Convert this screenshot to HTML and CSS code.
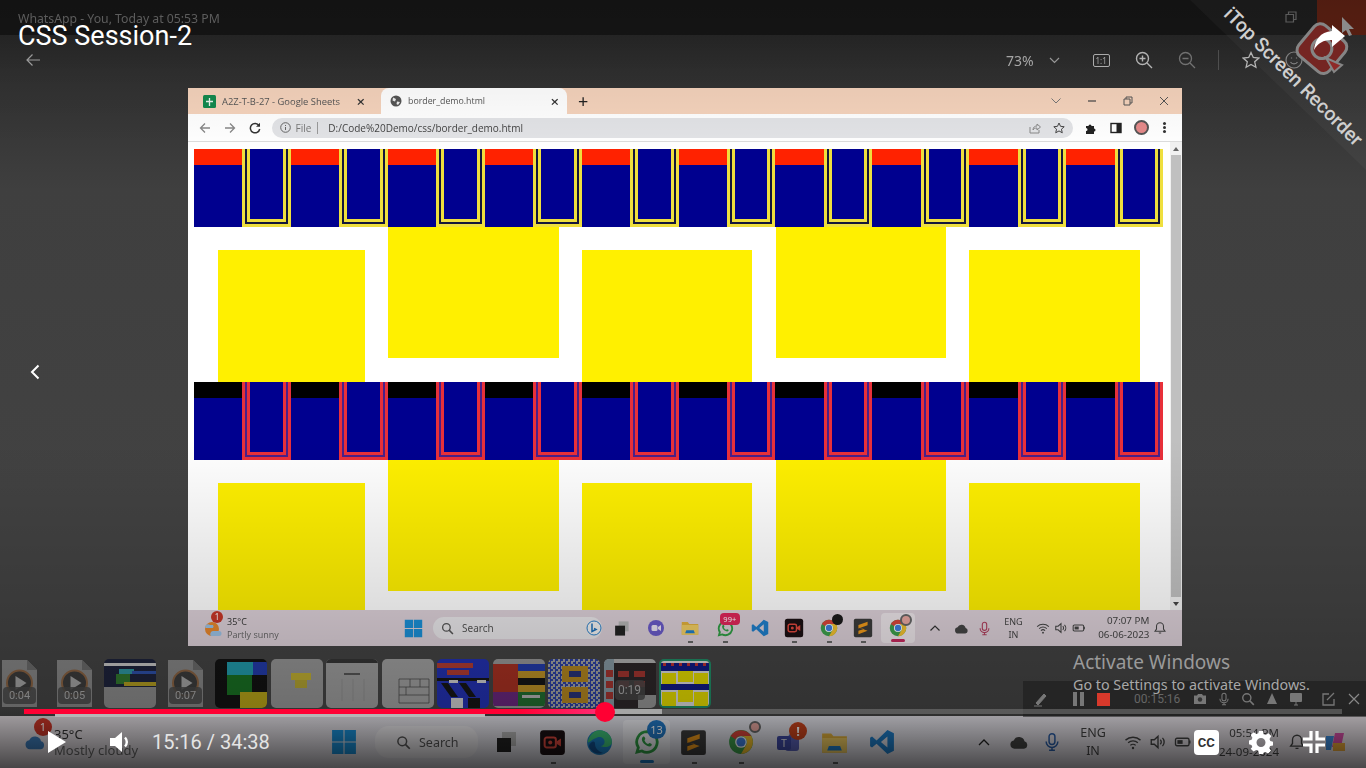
FILE: index.html
```html
<!DOCTYPE html>
<html lang="en">
<head>
    <meta charset="UTF-8">
    <meta name="viewport" content="width=device-width, initial-scale=1.0">
    <title>CSS Session-2</title>
    <link rel="stylesheet" href="styles.css">
</head>
<body>
    <svg class="sprite" aria-hidden="true">
        <symbol id="i-win" viewBox="0 0 24 24"><path fill="#1a8fd6" d="M1 1h10.5v10.5H1zM12.500 1H23v10.5H12.500zM1 12.500h10.5V23H1zM12.500 12.500H23V23H12.500z"/></symbol>
        <symbol id="i-search" viewBox="0 0 24 24"><circle cx="10" cy="10" r="7" fill="none" stroke="currentColor" stroke-width="2.4"/><path d="M15 15l7 7" stroke="currentColor" stroke-width="2.8"/></symbol>
        <symbol id="i-chrome" viewBox="0 0 24 24"><circle cx="12" cy="12" r="11" fill="#3d9f4c"/><path fill="#d9453a" d="M2.500 6.500A11 11 0 0 1 21.500 6.500H12a5.500 5.500 0 0 0-5 3.200z"/><path fill="#f2c02e" d="M21.500 6.500A11 11 0 0 1 12 23l4.800-8.200A5.500 5.500 0 0 0 12 6.500z"/><circle cx="12" cy="12" r="5.400" fill="#fff"/><circle cx="12" cy="12" r="4.200" fill="#3f7fe0"/></symbol>
        <symbol id="i-whatsapp" viewBox="0 0 24 24"><path fill="none" stroke="#2f9e44" stroke-width="2.600" d="M12 2.500a9.500 9.500 0 0 0-8 14.600L2.800 21.400l4.500-1.100A9.500 9.500 0 1 0 12 2.500z"/><path fill="#2f9e44" d="M8.300 7.200c1-.9 1.600.2 2.100 1.600.2.600-.8 1.200-.7 1.700.5 1.400 1.900 2.800 3.200 3.300.5.100 1-.9 1.600-.8 1.400.5 2.500 1 1.700 2.200-1 1.400-2.800 1-4.600.1-2-1-3.400-2.600-4.100-4.400-.5-1.500-.2-2.800.8-3.700z"/></symbol>
        <symbol id="i-vscode" viewBox="0 0 24 24"><path fill="#1f7fcb" d="M17 1l6 3v16l-6 3L7 13.500 2.800 17 1 16V8l1.800-1L7 10.500zM17 7l-6 5 6 5z"/></symbol>
        <symbol id="i-folder" viewBox="0 0 24 24"><path fill="#e3b23c" d="M1 4h8l2 2.500h12V21H1z"/><path fill="#f3cf63" d="M1 8h22v13H1z"/><path fill="#1f7fcb" d="M7 15h10l1.500 4h-13z"/></symbol>
        <symbol id="i-sublime" viewBox="0 0 24 24"><rect x="1" y="1" width="22" height="22" rx="2" fill="#3b3b3b"/><path fill="#f09a1a" d="M17.500 4.500v4.200L6.500 12.500V8.300zM6.500 11.500l11 3.700L6.500 19.500v-4.200l6.500-2z"/></symbol>
        <symbol id="i-rec" viewBox="0 0 24 24"><rect x="1" y="1" width="22" height="22" rx="3" fill="#1b1013"/><rect x="5" y="7.500" width="10" height="9" rx="2" fill="none" stroke="#e0483e" stroke-width="1.800"/><path fill="#e0483e" d="M15.500 11l4-2.500v7l-4-2.500z"/><circle cx="10" cy="12" r="1.800" fill="#e0483e"/></symbol>
        <symbol id="i-edge" viewBox="0 0 24 24"><circle cx="12" cy="12" r="11" fill="#1b7fc4"/><path fill="#3fc47a" d="M1.500 12C2.500 5 8 1 12 1c6 0 11 4.500 11 10.500 0 3-3 4.500-5.500 4.500-3 0-4.500-1-4.500-1 2 0 3.500-1.500 3.500-3.500C16.500 8 13 6.500 10 7.500 5.500 9 3 12 1.500 12z"/><path fill="#12508f" d="M8 13c0 4 3 7 7 8-5 2.500-11-1-12.500-6C4 11 8 9.500 8 13z"/></symbol>
        <symbol id="i-task" viewBox="0 0 24 24"><rect x="8" y="2" width="14" height="14" fill="#b4b4b4"/><rect x="3" y="8" width="14" height="14" fill="#222"/></symbol>
        <symbol id="i-cloud" viewBox="0 0 24 24"><path fill="currentColor" d="M6.500 20a5 5 0 0 1-.8-9.900 6.800 6.800 0 0 1 12.900 1.100A4.500 4.500 0 0 1 18 20z"/></symbol>
        <symbol id="i-mic" viewBox="0 0 24 24"><rect x="8.500" y="2" width="7" height="13" rx="3.500" fill="none" stroke="currentColor" stroke-width="1.800"/><path d="M5 11.500a7 7 0 0 0 14 0M12 18.500V22M8.500 22h7" fill="none" stroke="currentColor" stroke-width="1.800"/></symbol>
        <symbol id="i-wifi" viewBox="0 0 24 24"><path d="M2 9.500a15 15 0 0 1 20 0M5.500 13a10 10 0 0 1 13 0M8.500 16.500a5 5 0 0 1 7 0" fill="none" stroke="currentColor" stroke-width="1.800"/><circle cx="12" cy="20" r="1.600" fill="currentColor"/></symbol>
        <symbol id="i-volume" viewBox="0 0 24 24"><path d="M3 9h4l5-4.500v15L7 15H3z" fill="none" stroke="currentColor" stroke-width="1.800"/><path d="M15 9a4 4 0 0 1 0 6M18 6.500a8 8 0 0 1 0 11" fill="none" stroke="currentColor" stroke-width="1.800"/></symbol>
        <symbol id="i-battery" viewBox="0 0 24 24"><rect x="2" y="7" width="18" height="10" rx="2" fill="none" stroke="currentColor" stroke-width="1.800"/><rect x="4.500" y="9.500" width="7" height="5" fill="currentColor"/><path d="M21 10v4" stroke="currentColor" stroke-width="2"/></symbol>
        <symbol id="i-bell" viewBox="0 0 24 24"><path d="M12 3a6 6 0 0 0-6 6v5l-2.500 3.500h17L18 14V9a6 6 0 0 0-6-6zM10 20.500h4" fill="none" stroke="currentColor" stroke-width="1.800"/></symbol>
        <symbol id="i-thumbfile" viewBox="0 0 35 49"><path fill="#8a8a8a" d="M0 1h25l10 10v37H0z"/><path fill="#6c6c6c" d="M25 1l10 10H25z"/><circle cx="17.500" cy="24" r="12.500" fill="#3a3a3a" stroke="#8d6340" stroke-width="2"/><path fill="#aaa" d="M13.500 17l11 7-11 7z"/></symbol>
    </svg>

    <div class="stage">
        <div class="video">
            <div class="viewer-head">
                <span class="viewer-caption">WhatsApp - You, Today at 05:53 PM</span>
                <svg class="viewer-restore" width="14" height="14" viewBox="0 0 14 14"><path d="M2 4.500h7.500V12H2zM4.500 4.500V2H12v7.500H9.500" fill="none" stroke="#666" stroke-width="1.200"/></svg>
                <span class="viewer-close"></span>
            </div>
            <div class="viewer-tools">
                <svg class="tool-back" width="16" height="14" viewBox="0 0 16 14"><path d="M15 7H2M7.500 1.500L2 7l5.500 5.500" fill="none" stroke="#aaa" stroke-width="1.200"/></svg>
                <span class="tool-zoom">73%</span>
                <svg class="tool-chevron" width="11" height="7" viewBox="0 0 11 7"><path d="M1 1l4.500 4.500L10 1" fill="none" stroke="#a5a5a5" stroke-width="1.200"/></svg>
                <span class="tool-ratio">1:1</span>
                <svg class="tool-icon" width="18" height="18" viewBox="0 0 18 18"><circle cx="7.500" cy="7.500" r="6" fill="none" stroke="#c4c4c4" stroke-width="1.400"/><path d="M12 12l5 5M4.500 7.500h6M7.500 4.500v6" stroke="#c4c4c4" stroke-width="1.400"/></svg>
                <svg class="tool-icon" width="18" height="18" viewBox="0 0 18 18"><circle cx="7.500" cy="7.500" r="6" fill="none" stroke="#7c7c7c" stroke-width="1.300"/><path d="M12 12l5 5M4.500 7.500h6" stroke="#7c7c7c" stroke-width="1.300"/></svg>
                <span class="tool-divider"></span>
                <svg class="tool-icon" width="18" height="18" viewBox="0 0 18 18"><path d="M9 1.500l2.300 5 5.500.6-4.100 3.700 1.200 5.400L9 13.400l-4.900 2.800 1.200-5.400L1.200 7.100l5.500-.6z" fill="none" stroke="#c4c4c4" stroke-width="1.300"/></svg>
                <svg class="tool-smile" width="18" height="18" viewBox="0 0 18 18"><circle cx="9" cy="9" r="8" fill="none" stroke="#8a8a8a" stroke-width="1.200"/><path d="M5.500 11c1.500 2.500 5.500 2.500 7 0M6.500 6.500v1M11.500 6.500v1" fill="none" stroke="#8a8a8a" stroke-width="1.200"/></svg>
            </div>

            <div class="browser">
                <div class="tab-strip">
                    <div class="tab">
                        <svg width="13" height="13" viewBox="0 0 13 13"><rect width="13" height="13" rx="1.500" fill="#138a4f"/><path d="M6.500 3v8M3 6.500h7" stroke="#e9f5ee" stroke-width="1.300"/></svg>
                        <span class="tab-title tab-title-long">A2Z-T-B-27 - Google Sheets</span>
                        <span class="tab-x">×</span>
                    </div>
                    <div class="tab tab-active">
                        <svg width="12" height="12" viewBox="0 0 12 12"><circle cx="6" cy="6" r="5.500" fill="#555"/><path d="M3 2.500l3 1.500-1 2.500-2.500-1zM7 6.500l3 .5-2 3-1.500-1z" fill="#eee"/></svg>
                        <span class="tab-title">border_demo.html</span>
                        <span class="tab-x">×</span>
                    </div>
                    <span class="tab-new">+</span>
                    <div class="window-btns">
                        <svg width="10" height="6" viewBox="0 0 10 6"><path d="M.5.5L5 5 9.500.5" fill="none" stroke="#777" stroke-width="1"/></svg>
                        <svg width="10" height="10" viewBox="0 0 10 10"><path d="M1 5h8" stroke="#444" stroke-width="1.200"/></svg>
                        <svg width="10" height="10" viewBox="0 0 10 10"><path d="M1 3h6v6H1zM3 3V1h6v6H7" fill="none" stroke="#555" stroke-width="1"/></svg>
                        <svg width="10" height="10" viewBox="0 0 10 10"><path d="M1 1l8 8M9 1l-8 8" stroke="#555" stroke-width="1"/></svg>
                    </div>
                </div>
                <div class="address-bar">
                    <svg class="nav-btn" width="12" height="12" viewBox="0 0 12 12"><path d="M11 6H1.500M6 1.500L1.500 6 6 10.500" fill="none" stroke="#888" stroke-width="1.300"/></svg>
                    <svg class="nav-btn" width="12" height="12" viewBox="0 0 12 12"><path d="M1 6h9.500M6 1.500L10.500 6 6 10.500" fill="none" stroke="#888" stroke-width="1.300"/></svg>
                    <svg class="nav-btn nav-last" width="12" height="12" viewBox="0 0 12 12"><path d="M10 3.500A4.700 4.700 0 1 0 10.700 7" fill="none" stroke="#333" stroke-width="1.500"/><path d="M11 .8v4H7z" fill="#333"/></svg>
                    <div class="omnibox">
                        <svg width="11" height="11" viewBox="0 0 11 11"><circle cx="5.500" cy="5.500" r="4.800" fill="none" stroke="#666" stroke-width="1"/><path d="M5.500 5v3M5.500 3v1" stroke="#666" stroke-width="1"/></svg>
                        <span class="omni-file">File</span>
                        <span class="omni-sep"></span>
                        <span class="omni-url">D:/Code%20Demo/css/border_demo.html</span>
                        <svg class="omni-share" width="12" height="12" viewBox="0 0 12 12"><path d="M1 5v6h9V8M4 8c0-3 2-4 4-4V2l3.500 3L8 8V6C6 6 5 6.500 4 8z" fill="none" stroke="#888" stroke-width="1"/></svg>
                        <svg class="omni-star" width="12" height="12" viewBox="0 0 18 18"><path d="M9 1.500l2.300 5 5.500.6-4.100 3.700 1.200 5.400L9 13.400l-4.900 2.800 1.200-5.400L1.200 7.100l5.500-.6z" fill="none" stroke="#444" stroke-width="1.500"/></svg>
                    </div>
                    <svg class="ext-btn" width="12" height="12" viewBox="0 0 12 12"><path d="M1 4h2.500a1.500 1.500 0 1 1 3 0H9v2.500a1.500 1.500 0 1 1 0 3V12H1V9a1.500 1.500 0 1 0 0-3z" fill="#222"/></svg>
                    <svg class="ext-btn" width="12" height="12" viewBox="0 0 12 12"><rect x="1" y="1.500" width="10" height="9" fill="none" stroke="#222" stroke-width="1.400"/><rect x="6.500" y="1.500" width="4.500" height="9" fill="#222"/></svg>
                    <span class="avatar"></span>
                    <span class="dots"></span>
                </div>
                <div class="page">
                    <div class="page-body">
                        <div class="stripes">
                            <i class="cell"></i><i class="frame"></i><i class="cell"></i><i class="frame"></i><i class="cell"></i><i class="frame"></i><i class="cell"></i><i class="frame"></i><i class="cell"></i><i class="frame"></i>
                            <i class="cell"></i><i class="frame"></i><i class="cell"></i><i class="frame"></i><i class="cell"></i><i class="frame"></i><i class="cell"></i><i class="frame"></i><i class="cell"></i><i class="frame"></i>
                        </div>
                        <div class="boxes">
                            <i class="box box-first"></i><i class="box box-high"></i><i class="box"></i><i class="box box-high"></i><i class="box"></i>
                        </div>
                        <div class="stripes stripes-dark">
                            <i class="cell"></i><i class="frame"></i><i class="cell"></i><i class="frame"></i><i class="cell"></i><i class="frame"></i><i class="cell"></i><i class="frame"></i><i class="cell"></i><i class="frame"></i>
                            <i class="cell"></i><i class="frame"></i><i class="cell"></i><i class="frame"></i><i class="cell"></i><i class="frame"></i><i class="cell"></i><i class="frame"></i><i class="cell"></i><i class="frame"></i>
                        </div>
                        <div class="boxes">
                            <i class="box box-first"></i><i class="box box-high"></i><i class="box"></i><i class="box box-high"></i><i class="box"></i>
                        </div>
                    </div>
                    <div class="scrollbar">
                        <span class="scroll-arrow"></span>
                        <span class="scroll-thumb"></span>
                        <span class="scroll-arrow scroll-arrow-down"></span>
                    </div>
                </div>
                <div class="taskbar taskbar-inner">
                    <div class="weather">
                        <svg width="20" height="20" viewBox="0 0 20 20"><circle cx="9" cy="11" r="7" fill="#e8872c"/><path d="M2 9a3 3 0 0 1 5-2h3a2.500 2.500 0 0 1 0 3H3zM8 18a3 3 0 0 1 2-5h6a2.500 2.500 0 0 1 0 5z" fill="#9cc3e6"/></svg>
                        <span class="notify">1</span>
                        <div class="weather-text"><span>35°C</span><span class="weather-sub">Partly sunny</span></div>
                    </div>
                    <svg class="start" width="19" height="19"><use href="#i-win"/></svg>
                    <div class="search-pill">
                        <svg width="13" height="13"><use href="#i-search"/></svg>
                        <span>Search</span>
                        <svg class="bing" width="16" height="16" viewBox="0 0 16 16"><circle cx="8" cy="8" r="7" fill="#f2f2f2" stroke="#2a7fc9" stroke-width="1"/><path d="M6 3.500v8l4-2-2-1" fill="none" stroke="#1d6fb8" stroke-width="1.500"/></svg>
                    </div>
                    <div class="apps">
                        <span class="app"><svg width="17" height="17"><use href="#i-task"/></svg></span>
                        <span class="app"><svg width="18" height="18" viewBox="0 0 18 18"><circle cx="9" cy="9" r="8" fill="#6a5bc9"/><rect x="4.500" y="6" width="6" height="6" rx="1.500" fill="#ece6f5"/><path d="M11 8l3-2v6l-3-2z" fill="#ece6f5"/></svg></span>
                        <span class="app app-on"><svg width="18" height="18"><use href="#i-folder"/></svg></span>
                        <span class="app app-on"><svg width="17" height="17"><use href="#i-whatsapp"/></svg><b class="badge badge-99">99+</b></span>
                        <span class="app"><svg width="18" height="18"><use href="#i-vscode"/></svg></span>
                        <span class="app app-on"><svg width="20" height="20"><use href="#i-rec"/></svg></span>
                        <span class="app app-on"><svg width="18" height="18"><use href="#i-chrome"/></svg><b class="badge badge-dot"></b></span>
                        <span class="app app-on"><svg width="20" height="20"><use href="#i-sublime"/></svg></span>
                        <span class="app app-active"><svg width="18" height="18"><use href="#i-chrome"/></svg><b class="badge badge-ring"></b></span>
                    </div>
                    <div class="tray">
                        <svg class="caret" width="10" height="6" viewBox="0 0 10 6"><path d="M.5 5.500L5 1l4.500 4.500" fill="none" stroke="#333" stroke-width="1.200"/></svg>
                        <svg class="tray-cloud" width="15" height="15"><use href="#i-cloud"/></svg>
                        <svg class="tray-mic" width="15" height="15"><use href="#i-mic"/></svg>
                        <span class="lang">ENG<br>IN</span>
                        <svg width="14" height="14"><use href="#i-wifi"/></svg>
                        <svg width="14" height="14"><use href="#i-volume"/></svg>
                        <svg width="14" height="14"><use href="#i-battery"/></svg>
                        <span class="clock">07:07 PM<br>06-06-2023</span>
                        <svg width="14" height="14"><use href="#i-bell"/></svg>
                    </div>
                </div>
            </div>

            <div class="thumbs">
                <div class="thumb thumb-file"><svg width="35" height="49"><use href="#i-thumbfile"/></svg><span class="thumb-time">0:04</span></div>
                <div class="thumb thumb-file thumb-gap"><svg width="35" height="49"><use href="#i-thumbfile"/></svg><span class="thumb-time">0:05</span></div>
                <div class="thumb thumb-pic thumb-sep"><svg viewBox="0 0 52 49"><rect width="52" height="49" fill="#1a1f3a"/><rect y="4" width="52" height="3" fill="#cfcfcf"/><rect x="0" y="28" width="52" height="21" fill="#8f8f8f"/><rect x="15" y="10" width="15" height="5" fill="#2b9aa5"/><rect x="12" y="15" width="14" height="10" fill="#2f7a2b"/><rect x="20" y="23" width="32" height="4" fill="#b8a11e"/><rect x="28" y="12" width="24" height="3" fill="#2a4fae"/></svg></div>
                <div class="thumb thumb-file thumb-sep"><svg width="35" height="49"><use href="#i-thumbfile"/></svg><span class="thumb-time">0:07</span></div>
                <div class="thumb thumb-pic thumb-sep"><svg viewBox="0 0 52 49"><rect width="52" height="49" fill="#0d0d0d"/><rect x="12" y="3" width="27" height="13" fill="#1d9fb0"/><rect x="38" y="3" width="14" height="13" fill="#1f3ab0"/><rect x="12" y="16" width="25" height="20" fill="#14711f"/><rect x="25" y="33" width="27" height="16" fill="#bda914"/></svg></div>
                <div class="thumb thumb-pic"><svg viewBox="0 0 52 49"><rect width="52" height="49" fill="#9a9a9a"/><rect x="20" y="14" width="20" height="7" fill="#c9b630"/><rect x="24" y="21" width="12" height="8" fill="#b9a930"/></svg></div>
                <div class="thumb thumb-pic"><svg viewBox="0 0 52 49"><rect width="52" height="49" fill="#a2a2a2"/><rect y="0" width="52" height="4" fill="#333"/><rect x="18" y="14" width="16" height="2" fill="#555"/><path d="M16 20v22M27 20v22M38 20v22" stroke="#8a8a8a" stroke-width=".6"/></svg></div>
                <div class="thumb thumb-pic"><svg viewBox="0 0 52 49"><rect width="52" height="49" fill="#a5a5a5"/><path d="M17 20h30v24H17zM17 28h30M17 36h30M28 20v8M38 20v8M24 28v8" fill="none" stroke="#444" stroke-width=".7"/></svg></div>
                <div class="thumb thumb-pic"><svg viewBox="0 0 52 49"><rect width="52" height="49" fill="#1f2fb8"/><rect y="4" width="36" height="5" fill="#b83a30"/><rect x="10" y="11" width="22" height="5" fill="#b83a30"/><rect y="19" width="52" height="3" fill="#111"/><rect x="12" y="21" width="9" height="3" fill="#d8d8d8"/><rect x="40" y="21" width="9" height="3" fill="#d8d8d8"/><path d="M4 24l10 14h7L11 24zM22 24l10 14h7L29 24z" fill="#111"/><path d="M14 39h12v10H14z" fill="#d8d8d8"/><rect x="31" y="39" width="12" height="10" fill="#111"/></svg></div>
                <div class="thumb thumb-pic"><svg viewBox="0 0 52 49"><rect width="52" height="49" fill="#9c9c9c"/><rect y="5" width="25" height="28" fill="#ad2d1e"/><rect y="33" width="25" height="14" fill="#6b2480"/><rect x="25" y="5" width="27" height="7" fill="#1f3ab0"/><rect x="25" y="12" width="27" height="7" fill="#c49622"/><rect x="25" y="19" width="27" height="7" fill="#111"/><rect x="25" y="26" width="27" height="7" fill="#c49622"/><rect x="25" y="33" width="27" height="14" fill="#1d6f2c"/><rect x="29" y="36" width="18" height="3" fill="#bbb"/></svg></div>
                <div class="thumb thumb-pic thumb-check"><svg viewBox="0 0 52 49"><rect x="14" y="7" width="26" height="16" fill="#b98a1c"/><rect x="21" y="12" width="12" height="6" fill="#25307a"/><rect x="14" y="28" width="26" height="16" fill="#b98a1c"/><rect x="21" y="33" width="12" height="6" fill="#25307a"/></svg></div>
                <div class="thumb thumb-pic"><svg viewBox="0 0 52 49"><rect width="52" height="49" fill="#2a2326"/><rect width="52" height="4" fill="#b9b9b9"/><rect y="0" width="10" height="49" fill="#8b9fa8"/><rect x="2" y="11" width="7" height="7" fill="#a8322c"/><rect x="2" y="22" width="7" height="7" fill="#a8322c"/><rect x="2" y="33" width="7" height="7" fill="#a8322c"/><rect x="14" y="12" width="11" height="6" fill="#a8322c"/><rect x="30" y="12" width="11" height="6" fill="#a8322c"/><rect x="14" y="22" width="11" height="6" fill="#a8322c"/><rect x="30" y="22" width="11" height="6" fill="#a8322c"/><rect x="34" y="36" width="18" height="13" fill="#9a9a9a"/></svg><span class="thumb-time thumb-time-wide">0:19</span></div>
                <div class="thumb thumb-pic thumb-selected"><svg viewBox="0 0 48 45"><rect width="48" height="45" fill="#d5d5d5"/><rect y="2" width="48" height="8" fill="#101a80"/><path d="M2 2h3v3H2zM10 2h3v3h-3zM18 2h3v3h-3zM26 2h3v3h-3zM34 2h3v3h-3zM42 2h3v3h-3z" fill="#b83030"/><rect x="1" y="12" width="14" height="11" fill="#ddd400"/><rect x="17" y="10" width="15" height="11" fill="#ddd400"/><rect x="33" y="12" width="14" height="11" fill="#ddd400"/><rect y="23" width="48" height="6" fill="#101a80"/><rect x="1" y="31" width="14" height="14" fill="#ddd400"/><rect x="17" y="29" width="15" height="12" fill="#ddd400"/><rect x="33" y="31" width="14" height="14" fill="#ddd400"/></svg></div>
            </div>

            <div class="taskbar taskbar-outer">
                <div class="weather">
                    <svg width="30" height="22"><use href="#i-cloud" class="outer-cloud"/></svg>
                    <span class="notify">1</span>
                    <div class="weather-text"><span>35°C</span><span class="weather-sub">Mostly cloudy</span></div>
                </div>
                <svg class="start" width="26" height="26"><use href="#i-win"/></svg>
                <div class="search-pill">
                    <svg width="15" height="15"><use href="#i-search"/></svg>
                    <span>Search</span>
                </div>
                <div class="apps">
                    <span class="app"><svg width="24" height="24"><use href="#i-task"/></svg></span>
                    <span class="app app-on"><svg width="27" height="27"><use href="#i-rec"/></svg></span>
                    <span class="app"><svg width="27" height="27"><use href="#i-edge"/></svg></span>
                    <span class="app app-active"><svg width="26" height="26"><use href="#i-whatsapp"/></svg><b class="badge badge-13">13</b></span>
                    <span class="app app-on"><svg width="27" height="27"><use href="#i-sublime"/></svg></span>
                    <span class="app app-on"><svg width="26" height="26"><use href="#i-chrome"/></svg><b class="badge badge-ring"></b></span>
                    <span class="app"><svg width="26" height="26" viewBox="0 0 26 26"><circle cx="18" cy="9" r="5" fill="#5a62b8"/><rect x="10" y="8" width="14" height="14" rx="3" fill="#5a62b8"/><rect x="2" y="7" width="14" height="14" rx="2" fill="#3f4aa5"/><text x="9" y="18" text-anchor="middle" font-size="10" font-family="Roboto, sans-serif" fill="#eee">T</text></svg><b class="badge badge-alert">!</b></span>
                    <span class="app app-on"><svg width="27" height="27"><use href="#i-folder"/></svg></span>
                    <span class="app"><svg width="26" height="26"><use href="#i-vscode"/></svg></span>
                </div>
                <div class="tray">
                    <svg class="caret" width="12" height="7" viewBox="0 0 12 7"><path d="M1 6l5-5 5 5" fill="none" stroke="#222" stroke-width="1.300"/></svg>
                    <svg class="tray-cloud" width="20" height="20"><use href="#i-cloud"/></svg>
                    <svg class="tray-mic" width="20" height="20"><use href="#i-mic"/></svg>
                    <span class="lang">ENG<br>IN</span>
                    <svg width="18" height="18"><use href="#i-wifi"/></svg>
                    <svg width="18" height="18"><use href="#i-volume"/></svg>
                    <svg width="18" height="18"><use href="#i-battery"/></svg>
                    <span class="clock">05:54 PM<br>24-09-2024</span>
                    <svg width="18" height="18"><use href="#i-bell"/></svg>
                    <svg class="copilot" width="24" height="24" viewBox="0 0 24 24"><path fill="#3f8fe0" d="M3 6h8l-3 14H3z"/><path fill="#d94fa8" d="M12 3h9l-3 14H9z"/><path fill="#e8a83a" d="M10 13h12v8H10z"/></svg>
                </div>
            </div>
        </div>

        <div class="shade-top"></div>
        <div class="shade-bottom"></div>

        <div class="corner-wedge"></div>
        <svg class="rec-logo" width="60" height="60" viewBox="0 0 60 60"><g transform="rotate(40 30 30)"><rect x="9" y="9" width="40" height="40" rx="8" fill="#752522" stroke="#858585" stroke-width="3"/><circle cx="29" cy="29" r="10" fill="none" stroke="#858585" stroke-width="3"/></g><path d="M34 38l16 7-8 7z" fill="#8e2a28" stroke="#858585" stroke-width="2"/></svg>
        <span class="watermark">iTop Screen Recorder</span>
        <svg class="share" width="34" height="28" viewBox="0 0 34 28"><path fill="#fff" d="M20 1l13 11-13 11v-7C11 16 6 19 2 26c1-10 6-18 18-19z"/></svg>
        <svg class="cursor" width="14" height="20" viewBox="0 0 14 20"><path fill="#8b8b8b" d="M1 1l12 12H8l3 6-3 1-3-6-4 3z"/></svg>

        <h1 class="video-title">CSS Session-2</h1>
        <svg class="prev-arrow" width="10" height="16" viewBox="0 0 10 16"><path d="M8.500 1.500L2 8l6.500 6.500" fill="none" stroke="#fff" stroke-width="2"/></svg>

        <div class="recorder">
            <svg width="16" height="16" viewBox="0 0 16 16"><path d="M3 12l8-9 2 2-8 9zM1 15h8" fill="#777" stroke="#777"/></svg>
            <span class="rec-pause"></span>
            <span class="rec-stop"></span>
            <span class="rec-time">00:15:16</span>
            <svg width="14" height="14" viewBox="0 0 14 14"><path d="M1 3.500h3L5 2h4l1 1.500h3V12H1z" fill="#777"/><circle cx="7" cy="7.500" r="2.200" fill="#333"/></svg>
            <svg width="14" height="14" class="rec-dim"><use href="#i-mic"/></svg>
            <svg width="14" height="14" class="rec-dim"><use href="#i-search"/></svg>
            <svg width="14" height="14" viewBox="0 0 14 14"><path d="M7 1l5 11H2z" fill="#777"/></svg>
            <svg width="14" height="14" viewBox="0 0 14 14"><rect x="1" y="1" width="12" height="9" rx="1" fill="#777"/><path d="M5 13h4M7 10v3" stroke="#777"/></svg>
            <svg class="rec-edit" width="14" height="14" viewBox="0 0 14 14"><path d="M12 7v6H1V2h6M5 8l7-7" fill="none" stroke="#777" stroke-width="1.300"/></svg>
            <svg class="rec-close" width="12" height="12" viewBox="0 0 12 12"><path d="M1 1l10 10M11 1L1 11" stroke="#888" stroke-width="1.200"/></svg>
        </div>

        <div class="activate">
            <div class="activate-head">Activate Windows</div>
            <div class="activate-sub">Go to Settings to activate Windows.</div>
        </div>

        <div class="progress">
            <div class="progress-played"></div>
            <div class="progress-buffer"></div>
            <div class="progress-rest"></div>
            <span class="progress-dot"></span>
        </div>
        <div class="progress-fringe"></div>

        <div class="player">
            <svg class="play" width="20" height="24" viewBox="0 0 20 24"><path fill="#fff" d="M1 1l18 11L1 23z"/></svg>
            <svg class="volume" width="24" height="24" viewBox="0 0 24 24"><path fill="#fff" d="M2 8h5l7-6v20l-7-6H2z"/><path d="M17 7.500a6.500 6.500 0 0 1 0 9" fill="none" stroke="#fff" stroke-width="2.400"/></svg>
            <span class="time">15:16 / 34:38</span>
            <span class="cc">CC</span>
            <svg class="gear" width="24" height="24" viewBox="0 0 24 24"><path fill="#fff" d="M10 1h4l.7 3.200 2 .8L19.500 3.300l2.800 2.800L20.500 9l.8 2 2.700.7v3.800l-2.900.6-.8 2 1.700 2.700-2.800 2.800-2.700-1.700-2 .8L14 24h-4l-.7-3.300-2-.8-2.800 1.700-2.800-2.800L3.300 17l-.8-2L0 14.200V10.400l2.600-.6.800-2L1.700 5.100l2.800-2.800L7.300 4l2-.8zM12 8a4.500 4.500 0 1 0 0 9 4.500 4.500 0 0 0 0-9z"/></svg>
            <svg class="exit-full" width="24" height="24" viewBox="0 0 24 24"><path d="M9 1v8H1M15 1v8h8M9 23v-8H1M15 23v-8h8" fill="none" stroke="#fff" stroke-width="3.200"/></svg>
        </div>
    </div>
</body>
</html>
```

FILE: styles.css
```css
* {
    box-sizing: border-box;
}
html, body {
    margin: 0;
    padding: 0;
    background: #000;
}
.sprite {
    display: none;
}
svg {
    display: block;
    flex-shrink: 0;
}
.stage {
    position: relative;
    width: 1366px;
    height: 768px;
    overflow: hidden;
    font-family: 'Noto Sans', sans-serif;
}
.video {
    display: flex;
    flex-direction: column;
    height: 768px;
    background: linear-gradient(#292929 35px, #303030 70px, #3f3f3f 190px, #424242 500px);
    filter: blur(0.55px);
}

/* photo viewer chrome */
.viewer-head {
    display: flex;
    align-items: flex-start;
    height: 35px;
    flex-shrink: 0;
    padding-left: 18px;
    background: #171717;
}
.viewer-caption {
    margin-top: 10px;
    font-size: 12.25px;
    line-height: 17px;
    color: #6d6d6d;
}
.viewer-restore {
    margin: 10px 0 0 auto;
}
.viewer-close {
    width: 49px;
    height: 35px;
    margin-left: 19px;
    background: #5c1a0c;
}
.viewer-tools {
    display: flex;
    align-items: center;
    height: 50px;
    flex-shrink: 0;
    padding-left: 25px;
    color: #b5b5b5;
}
.tool-zoom {
    margin-left: 965px;
    font-size: 14px;
}
.tool-chevron {
    margin-left: 15px;
}
.tool-ratio {
    width: 17px;
    height: 13px;
    margin-left: 33px;
    border: 1px solid #bbb;
    border-radius: 2px;
    font-size: 8px;
    line-height: 11px;
    text-align: center;
}
.tool-icon {
    margin-left: 25px;
}
.tool-divider {
    width: 1px;
    height: 20px;
    margin-left: 22px;
    background: #555;
}
.tool-divider + .tool-icon {
    margin-left: 23px;
}
.tool-smile {
    margin-left: 25px;
}

/* recorded browser window */
.browser {
    display: flex;
    flex-direction: column;
    width: 994px;
    height: 558px;
    flex-shrink: 0;
    margin: 3px 0 0 188px;
    background: #fff;
}
.tab-strip {
    display: flex;
    align-items: flex-end;
    height: 26px;
    flex-shrink: 0;
    padding-left: 8px;
    background: #f5d3bc;
}
.tab {
    display: flex;
    align-items: center;
    gap: 6px;
    width: 177px;
    height: 26px;
    padding: 0 8px 0 7px;
    font-family: 'Open Sans', sans-serif;
    font-size: 8.8px;
    color: #555;
}
.tab-title-long {
    font-size: 9.4px;
}
.tab-active {
    width: 186px;
    margin-left: 8px;
    padding-left: 9px;
    border-radius: 8px 8px 0 0;
    background: #fff;
}
.tab-x {
    margin-left: auto;
    font-size: 15px;
    font-weight: 600;
    line-height: 14px;
    color: #333;
}
.tab-new {
    align-self: center;
    margin-left: 11px;
    font-size: 18px;
    line-height: 18px;
    color: #222;
}
.window-btns {
    display: flex;
    align-items: center;
    gap: 26px;
    align-self: center;
    margin-left: auto;
    padding-right: 13px;
}
.address-bar {
    display: flex;
    align-items: center;
    height: 28px;
    flex-shrink: 0;
    padding-left: 11px;
    border-bottom: 1px solid #dcdcdc;
}
.nav-btn {
    margin-right: 13px;
}
.nav-last {
    margin-right: 10.5px;
}
.omnibox {
    display: flex;
    align-items: center;
    width: 801px;
    height: 20px;
    padding: 0 8px;
    border-radius: 10px;
    background: #e2e3e6;
    font-family: 'Open Sans', sans-serif;
    font-size: 10px;
    color: #555;
}
.omni-file {
    margin-left: 5px;
    color: #777;
}
.omni-sep {
    width: 1px;
    height: 12px;
    margin: 0 10px 0 6px;
    background: #999;
}
.omni-url {
    color: #444;
}
.omni-share {
    margin-left: auto;
}
.omni-star {
    margin: 0 0 0 12px;
}
.ext-btn {
    margin-left: 12px;
}
.ext-btn + .ext-btn {
    margin-left: 13px;
}
.avatar {
    width: 15px;
    height: 15px;
    margin-left: 12px;
    border: 2px solid #555;
    border-radius: 50%;
    background: #e58a8a;
}
.dots {
    width: 3px;
    height: 3px;
    margin-left: 14px;
    border-radius: 50%;
    background: #333;
    box-shadow: 0 -4px 0 #333, 0 4px 0 #333;
}
.page {
    display: flex;
    height: 468px;
    flex-shrink: 0;
    overflow: hidden;
    background: #fff;
}
.page-body {
    width: 982px;
    padding: 7px 0 0 6px;
}
.stripes {
    display: grid;
    grid-template-columns: repeat(20, 1fr);
    width: 969px;
    height: 78px;
    --top: #ff2200;
    --line: #efdf3e;
    --gap: #14163a;
}
.stripes-dark {
    --top: #000;
    --line: #e8303a;
    --gap: #4a2088;
}
.cell {
    background: #00008f;
    border-top: 16px solid var(--top);
}
.frame {
    border: 8px double var(--line);
    border-top: 0;
    background: linear-gradient(#00008f, #00008f) padding-box, var(--gap) border-box;
}
.boxes {
    display: grid;
    grid-template-columns: 194px 194px 194px 193px 195px;
    height: 155px;
}
.box {
    margin: 23px 24px 0 0;
    background: #fff000;
}
.box-first {
    margin-left: 23.5px;
    margin-right: 23px;
}
.box-high {
    margin: 0 23.5px 24px 0;
}
.scrollbar {
    display: flex;
    flex-direction: column;
    align-items: center;
    width: 12px;
    background: #f1f1f1;
}
.scroll-arrow {
    width: 0;
    height: 0;
    margin: 5px 0 4px;
    border: 3px solid transparent;
    border-top: 0;
    border-bottom: 4px solid #666;
}
.scroll-arrow-down {
    border: 3px solid transparent;
    border-bottom: 0;
    border-top: 4px solid #444;
}
.scroll-thumb {
    width: 10px;
    flex: 1;
    background: #c0c0c0;
}

/* taskbars, one inside the recording and the real one */
.taskbar {
    display: flex;
    align-items: center;
    background: #dcd0d8;
    color: #333;
}
.taskbar-inner {
    height: 36px;
    flex-shrink: 0;
    padding-left: 15px;
    font-size: 9.5px;
}
.taskbar-outer {
    height: 52px;
    flex-shrink: 0;
    margin-top: auto;
    padding-left: 20px;
    font-size: 13px;
    background: linear-gradient(90deg, #ded8dc, #dfe0e8 50%, #e6dfe4);
}
.outer-cloud {
    color: #3d7bb8;
}
.weather {
    position: relative;
    display: flex;
    align-items: center;
    gap: 4px;
}
.weather .notify {
    position: absolute;
    left: 8px;
    top: -4px;
    width: 12px;
    height: 12px;
    border-radius: 50%;
    background: #c73527;
    color: #fff;
    font-size: 8px;
    line-height: 12px;
    text-align: center;
}
.weather-text {
    display: flex;
    flex-direction: column;
    line-height: 13px;
}
.weather-sub {
    color: #666;
}
.taskbar-inner .weather {
    width: 201px;
}
.taskbar-inner .weather-text {
    font-family: 'Open Sans', sans-serif;
    font-size: 9px;
}
.taskbar-outer .weather {
    width: 311px;
}
.taskbar-outer .weather .notify {
    left: 14px;
    top: -8px;
    width: 18px;
    height: 18px;
    font-size: 11px;
    line-height: 18px;
}
.taskbar-outer .weather-text {
    line-height: 16px;
}
.search-pill {
    display: flex;
    align-items: center;
    gap: 8px;
    border-radius: 14px;
    background: #e9e7ea;
    color: #555;
}
.taskbar-inner .search-pill {
    width: 169px;
    height: 22px;
    margin-left: 10px;
    padding-left: 8px;
    font-size: 10px;
}
.taskbar-inner .bing {
    margin-left: auto;
}
.taskbar-outer .search-pill {
    width: 103px;
    height: 32px;
    margin-left: 18px;
    padding-left: 21px;
    font-size: 12.5px;
}
.apps {
    display: flex;
}
.app {
    position: relative;
    display: flex;
    align-items: center;
    justify-content: center;
}
.taskbar-inner .apps {
    margin-left: 2px;
}
.taskbar-inner .app {
    width: 34.6px;
    height: 30px;
}
.taskbar-outer .apps {
    margin-left: 4px;
}
.taskbar-outer .app {
    width: 47px;
    height: 44px;
}
.app-on::after {
    content: "";
    position: absolute;
    left: 50%;
    bottom: 0;
    width: 5px;
    height: 2px;
    margin-left: -2px;
    background: #666;
}
.app-active {
    border-radius: 4px;
    background: rgba(255, 255, 255, 0.45);
}
.app-active::after {
    content: "";
    position: absolute;
    left: 50%;
    bottom: 1px;
    width: 14px;
    height: 3px;
    margin-left: -7px;
    border-radius: 2px;
    background: #c4285c;
}
.taskbar-outer .app-active::after {
    background: #1f7fcb;
}
.badge {
    position: absolute;
    font-style: normal;
    font-weight: 400;
    color: #fff;
    text-align: center;
}
.badge-99 {
    top: 0;
    left: 12px;
    width: 20px;
    height: 12px;
    border-radius: 4px;
    background: #e0265a;
    font-size: 7.5px;
    line-height: 12px;
}
.badge-dot {
    top: 1px;
    right: 3px;
    width: 11px;
    height: 11px;
    border-radius: 50%;
    background: #1a1a1a;
}
.badge-ring {
    top: 1px;
    right: 3px;
    width: 12px;
    height: 12px;
    border: 2px solid #666;
    border-radius: 50%;
    background: #e9a7a0;
}
.badge-13 {
    top: 0;
    right: 4px;
    width: 19px;
    height: 19px;
    border-radius: 50%;
    background: #2178c4;
    font-size: 11px;
    line-height: 19px;
}
.badge-alert {
    top: 2px;
    right: 4px;
    width: 18px;
    height: 18px;
    border-radius: 50%;
    background: #c8431c;
    font-size: 13px;
    font-weight: 700;
    line-height: 18px;
}
.tray {
    display: flex;
    align-items: center;
    color: #444;
}
.tray-mic {
    color: #b0405e;
}
.lang {
    text-align: center;
}
.clock {
    text-align: right;
}
.taskbar-inner .tray {
    gap: 4px;
    margin-left: 15px;
}
.taskbar-inner .caret {
    margin-right: 10px;
}
.taskbar-inner .tray-cloud {
    margin-right: 4px;
}
.taskbar-inner .lang {
    width: 34px;
    margin-right: 2px;
    font-size: 9px;
    line-height: 13px;
}
.taskbar-inner .clock {
    width: 59px;
    font-size: 9.8px;
    line-height: 14px;
}
.taskbar-outer .tray {
    gap: 7px;
    margin-left: 73px;
}
.taskbar-outer .caret {
    margin-right: 12px;
}
.taskbar-outer .tray-cloud {
    margin-right: 6px;
}
.taskbar-outer .tray-mic {
    color: #2c5fa8;
    margin-right: 3px;
}
.taskbar-outer .lang {
    width: 42px;
    margin-right: 3px;
    font-size: 12.5px;
    line-height: 18px;
}
.taskbar-outer .clock {
    width: 66px;
    margin: 0 2px 0 14px;
    font-size: 11.5px;
    line-height: 19px;
}
.copilot {
    margin-left: 10px;
}

/* preview strip */
.thumbs {
    display: flex;
    gap: 3.5px;
    height: 49px;
    flex-shrink: 0;
    margin-top: 13px;
    padding-left: 2px;
}
.thumb {
    position: relative;
    height: 49px;
    flex-shrink: 0;
    opacity: 0.9;
}
.thumb-file {
    width: 35px;
}
.thumb-pic {
    width: 52px;
    overflow: hidden;
    border-radius: 5px;
}
.thumb-pic svg {
    width: 100%;
    height: 100%;
}
.thumb-gap {
    margin-left: 16.5px;
}
.thumb-sep {
    margin-left: 8.5px;
}
.thumb-check {
    background: repeating-conic-gradient(#2a3fa8 0 25%, #a9a9a9 0 50%) 0 0 / 5px 5px;
}
.thumb-selected {
    border: 2px solid #1f8a64;
    opacity: 1;
}
.thumb-time {
    position: absolute;
    left: 1px;
    right: 1px;
    bottom: 4px;
    height: 17px;
    border-radius: 4px;
    background: rgba(70, 70, 70, 0.85);
    color: #b0b0b0;
    font-family: Roboto, sans-serif;
    font-size: 11px;
    line-height: 17px;
    text-align: center;
}
.thumb-time-wide {
    left: 11px;
    right: 11px;
    bottom: 8px;
    height: 20px;
    line-height: 20px;
    font-size: 12px;
}

/* overlays */
.shade-top {
    position: absolute;
    left: 0;
    top: 0;
    width: 100%;
    height: 150px;
    background: linear-gradient(rgba(0, 0, 0, 0.18), rgba(0, 0, 0, 0.05) 55%, rgba(0, 0, 0, 0));
    pointer-events: none;
}
.shade-bottom {
    position: absolute;
    left: 0;
    top: 440px;
    width: 100%;
    height: 328px;
    background: linear-gradient(rgba(0, 0, 0, 0), rgba(0, 0, 0, 0.13) 50%, rgba(0, 0, 0, 0.24) 82%, rgba(0, 0, 0, 0.68));
    pointer-events: none;
}
.corner-wedge {
    position: absolute;
    right: 0;
    top: 0;
    width: 176px;
    height: 170px;
    background: rgba(255, 255, 255, 0.03);
    clip-path: polygon(0 0, 100% 0, 100% 100%);
}
.rec-logo {
    position: absolute;
    left: 1292px;
    top: 20px;
}
.watermark {
    position: absolute;
    left: 1199px;
    top: 65px;
    width: 188px;
    font-family: Roboto, sans-serif;
    font-size: 19.5px;
    font-weight: 500;
    line-height: 24px;
    text-align: center;
    white-space: nowrap;
    color: #cfcfcf;
    transform: rotate(45deg);
}
.share {
    position: absolute;
    left: 1312px;
    top: 24px;
}
.cursor {
    position: absolute;
    left: 1341px;
    top: 16px;
}
.video-title {
    position: absolute;
    left: 18px;
    top: 20px;
    margin: 0;
    font-family: Roboto, sans-serif;
    font-size: 27px;
    font-weight: 400;
    line-height: 32px;
    color: #fff;
}
.prev-arrow {
    position: absolute;
    left: 30px;
    top: 364px;
}
.activate {
    position: absolute;
    left: 1073px;
    top: 650px;
    color: #9a9a9a;
}
.activate-head {
    font-size: 19px;
    line-height: 24px;
}
.activate-sub {
    font-size: 14.3px;
    line-height: 22px;
    color: #a8a8a8;
}
.recorder {
    position: absolute;
    left: 1023px;
    top: 681px;
    display: flex;
    align-items: center;
    gap: 10px;
    width: 343px;
    height: 36px;
    padding-left: 10px;
    background: rgba(25, 25, 25, 0.55);
}
.rec-dim {
    color: #777;
}
.rec-pause {
    width: 11px;
    height: 14px;
    margin-left: 14px;
    border: solid #777;
    border-width: 0 4px;
}
.rec-stop {
    width: 13px;
    height: 13px;
    margin-left: 3px;
    background: #d8392b;
}
.rec-time {
    margin: 0 3px 0 14px;
    font-family: Roboto, sans-serif;
    font-size: 12px;
    color: #666;
}
.rec-edit {
    margin-left: 9px;
}
.rec-close {
    margin-left: 2px;
}
.progress {
    position: absolute;
    left: 24px;
    top: 709px;
    display: flex;
    width: 1318px;
    height: 5px;
}
.progress-played {
    width: 581px;
    background: linear-gradient(90deg, #ff0033 0, #ff0033 85%, #ff2e78);
}
.progress-buffer {
    width: 57px;
    background: #a5a5a5;
}
.progress-rest {
    flex: 1;
    background: rgba(140, 140, 140, 0.45);
}
.progress-dot {
    position: absolute;
    left: 571px;
    top: -7px;
    width: 20px;
    height: 20px;
    border-radius: 50%;
    background: #ff0033;
}
.progress-fringe {
    position: absolute;
    left: 55px;
    top: 714px;
    width: 430px;
    height: 3px;
    background: #b5b5b5;
}
.player {
    position: absolute;
    left: 0;
    bottom: 0;
    display: flex;
    align-items: center;
    width: 100%;
    height: 52px;
    padding-left: 47px;
    color: #fff;
}
.volume {
    margin-left: 41px;
}
.time {
    margin-left: 20px;
    font-family: Roboto, sans-serif;
    font-size: 20px;
    color: #e4e4e4;
}
.cc {
    width: 25px;
    height: 25px;
    margin-left: 924px;
    border-radius: 4px;
    background: #fff;
    color: #333;
    font-family: Roboto, sans-serif;
    font-size: 13px;
    font-weight: 700;
    line-height: 25px;
    text-align: center;
}
.gear {
    margin-left: 30px;
}
.exit-full {
    margin-left: 29px;
}
```
